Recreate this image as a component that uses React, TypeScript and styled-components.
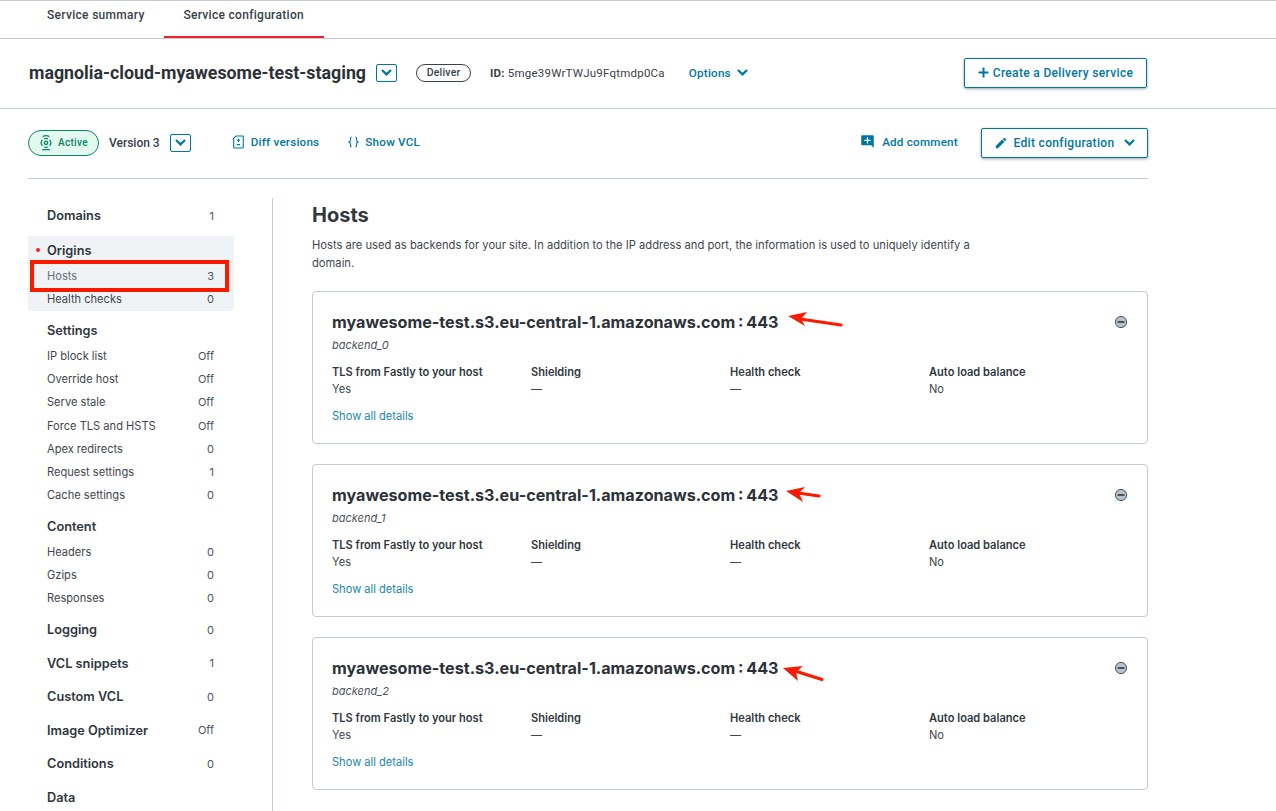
import { createGlobalStyle, styled } from "styled-components";
import { MdAddComment, MdEdit } from "react-icons/md";

const teal = "#00779e";
const ink = "#2c3238";
const line = "#c3cbd3";

const GlobalStyle = createGlobalStyle`
    html, body {
        margin: 0;
        height: 811px;
        overflow: hidden;
        background: #fff;
    }
    body {
        font-family: "Inter", "Liberation Sans", sans-serif;
        color: ${ink};
    }
`

const Tabs = styled.nav`
    display: flex;
    height: 37px;
    padding-left: 28px;
    border-top: 1px solid ${line};
    border-bottom: 1px solid ${line};
    font-family: "Roboto", sans-serif;
`

const Tab = styled.div<{ $active?: boolean }>`
    height: 37px;
    padding: 7px 19.7px 0 19px;
    box-sizing: border-box;
    font-size: 12px;
    font-weight: 500;
    letter-spacing: .3px;
    line-height: 14px;
    color: #3a4148;
    border-bottom: ${(p) => (p.$active ? "2px solid #f1222b" : "none")};
`

const ServiceBar = styled.header`
    display: flex;
    align-items: center;
    height: 70px;
    padding: 0 129px 2px 29px;
    box-sizing: border-box;
    border-bottom: 1px solid ${line};
    font-family: "Roboto", sans-serif;
`

const ServiceName = styled.h1`
    margin: 0 10px 0 0;
    font-size: 17.8px;
    font-weight: 700;
    color: ${ink};
`

const Caret = styled.button`
    display: flex;
    align-items: center;
    justify-content: center;
    width: 21px;
    height: 18px;
    padding: 0;
    border: 1px solid ${teal};
    border-radius: 2px;
    background: #fff;
    color: ${teal};
`

const TypeBadge = styled.span`
    margin-left: 19px;
    width: 55px;
    height: 18px;
    box-sizing: border-box;
    border: 1px solid #3a4148;
    border-radius: 9px;
    font-size: 10.5px;
    font-weight: 500;
    line-height: 16px;
    text-align: center;
    letter-spacing: .2px;
    color: #3a4148;
`

const ServiceId = styled.span`
    margin-left: 19px;
    font-size: 11.5px;
    letter-spacing: .22px;
    color: #3a4148;

    b {
        font-weight: 700;
    }
`

const OptionsLink = styled.span`
    display: flex;
    align-items: center;
    margin-left: 24px;
    gap: 6px;
    font-size: 11.7px;
    font-weight: 500;
    letter-spacing: .2px;
    color: ${teal};
`

const OutlineButton = styled.button<{ $w: number }>`
    display: flex;
    align-items: center;
    justify-content: center;
    width: ${(p) => p.$w}px;
    height: 30px;
    padding: 0;
    margin-left: auto;
    border: 1px solid ${teal};
    border-radius: 2px;
    background: #fff;
    box-shadow: 0 1px 3px rgba(30, 50, 70, .45);
    font-family: "Roboto", sans-serif;
    font-size: 12px;
    font-weight: 500;
    letter-spacing: .33px;
    color: ${teal};
`

const VersionBar = styled.div`
    display: flex;
    align-items: center;
    height: 70px;
    margin: 0 128px 0 28px;
    padding-bottom: 2px;
    box-sizing: border-box;
    border-bottom: 1px solid ${line};
    font-family: "Roboto", sans-serif;
`

const ActivePill = styled.span`
    display: flex;
    align-items: center;
    gap: 6px;
    width: 71px;
    height: 26px;
    padding-left: 11px;
    box-sizing: border-box;
    border: 1px solid #0c8466;
    border-radius: 13px;
    background: #e2f9f0;
    font-size: 10px;
    font-weight: 500;
    letter-spacing: .3px;
    color: #0c8466;
`

const VersionText = styled.span`
    margin: 0 10px;
    font-size: 12px;
    font-weight: 500;
    color: #3a4148;
`

const ActionLink = styled.span<{ $ml: number; $gap: number }>`
    display: flex;
    align-items: center;
    gap: ${(p) => p.$gap}px;
    margin: 0 0 2px ${(p) => p.$ml}px;
    font-size: 11.7px;
    font-weight: 500;
    letter-spacing: .2px;
    color: ${teal};
`

const Columns = styled.div`
    display: flex;
    margin: 19px 128px 0 28px;
`

const Sidebar = styled.aside`
    width: 206px;
    margin-right: 38px;
    padding-top: 3.7px;
    flex-shrink: 0;
`

const Group = styled.section<{ $current?: boolean; $gap: number }>`
    margin-bottom: ${(p) => p.$gap}px;
    border-radius: 2px;
    background: ${(p) => (p.$current ? "#f0f3f6" : "transparent")};
    position: relative;
`

const GroupTitle = styled.div`
    display: flex;
    align-items: center;
    justify-content: space-between;
    height: 28px;
    padding: 0 20px 0 19px;
    font-size: 12.75px;
    font-weight: 600;
    color: #31373e;
`

const Count = styled.span`
    font-size: 11px;
    font-weight: 400;
    color: #4b535b;
`

const Item = styled.div<{ $selected?: boolean }>`
    display: flex;
    align-items: center;
    justify-content: space-between;
    height: 23.17px;
    padding: 0 20px 0 19px;
    font-size: 11.1px;
    color: ${(p) => (p.$selected ? "#67707a" : "#3f464d")};
    position: relative;
`

const Bullet = styled.i`
    position: absolute;
    left: 8px;
    top: 12px;
    width: 4px;
    height: 4px;
    border-radius: 50%;
    background: #f1222b;
`

const Highlight = styled.div`
    position: absolute;
    left: 2px;
    top: -4px;
    width: 199px;
    height: 32px;
    box-sizing: border-box;
    border: 4px solid #fb1a00;
`

const Main = styled.main`
    flex: 1;
    padding-left: 39px;
    border-left: 1px solid ${line};
`

const PageTitle = styled.h2`
    margin: 4px 0 0;
    font-size: 20px;
    line-height: 26px;
    font-weight: 700;
    color: #31373e;
`

const Intro = styled.p`
    width: 680px;
    margin: 8px 0 19px;
    font-size: 11.2px;
    line-height: 18px;
    color: #3f464d;
`

const Card = styled.article`
    position: relative;
    height: 153px;
    margin-bottom: 20px;
    padding: 0 19px;
    box-sizing: border-box;
    border: 1px solid ${line};
    border-radius: 4px;
`

const HostName = styled.h3`
    margin: 0;
    padding-top: 19px;
    font-size: 16.15px;
    line-height: 22px;
    font-weight: 700;
    word-spacing: -1px;
    color: ${ink};
`

const BackendName = styled.div`
    margin-top: 4px;
    font-size: 11px;
    line-height: 16px;
    font-style: italic;
    color: #4b535b;
`

const Facts = styled.div`
    display: grid;
    grid-template-columns: repeat(4, 199px);
    margin-top: 11px;
`

const FactLabel = styled.div`
    font-size: 11.1px;
    line-height: 17px;
    font-weight: 600;
    color: #31373e;
`

const FactValue = styled.div`
    font-size: 11.1px;
    line-height: 17px;
    color: #3f464d;
`

const DetailsLink = styled.div`
    margin-top: 10px;
    font-size: 11.1px;
    line-height: 16px;
    color: #1a87ad;
`

const CollapseIcon = styled.svg`
    position: absolute;
    right: 19px;
    top: 23px;
`

const Arrow = styled.svg`
    position: absolute;
    left: 470px;
    top: 15px;
`

const Chevron = () => (
    <svg width="11" height="7" viewBox="0 0 11 7" fill="none" stroke="currentColor" strokeWidth="2.2">
        <path d="M1 1l4.5 4.4L10 1" />
    </svg>
)

const PlusIcon = () => (
    <svg width="11" height="11" viewBox="0 0 11 11" fill="none" stroke="currentColor" strokeWidth="2" style={{ marginRight: 4 }}>
        <path d="M5.5 .5v10M.5 5.5h10" />
    </svg>
)

const BroadcastIcon = () => (
    <svg width="12" height="18" viewBox="0 0 12 18" fill="none" stroke="#0c8466" strokeWidth="1.3">
        <circle cx="6" cy="8.8" r="1.7" />
        <path d="M2.4 5.8a4.6 4.6 0 0 0 0 6M9.6 5.8a4.6 4.6 0 0 1 0 6" />
        <path d="M2.6 2.6c1.8-1 5-1 6.8 0M4 4.8c1.2-.6 2.8-.6 4 0" />
        <path d="M4 13c1.2.5 2.8.5 4 0M2.2 15.6h7.6" />
    </svg>
)

const DiffIcon = () => (
    <svg width="11" height="14" viewBox="0 0 11 14" fill="none" stroke={teal} strokeWidth="1.1">
        <path d="M3 1H9.5a.8.8 0 0 1 .8.8V12.2a.8.8 0 0 1-.8.8H1.5a.8.8 0 0 1-.8-.8V3.2z" />
        <path d="M5.5 3.6v3.4M3.9 5.3h3.2M3.9 9.6h3.2" />
    </svg>
)

const BracesIcon = () => (
    <svg width="11" height="12" viewBox="0 0 11 12" fill="none" stroke={teal} strokeWidth="1.1">
        <path d="M3.6 1C2.4 1 2.4 2 2.4 3.4S2.2 5.6 1 6c1.2.4 1.4 1.2 1.4 2.6S2.4 11 3.6 11" />
        <path d="M7.4 1c1.2 0 1.2 1 1.2 2.4S8.8 5.6 10 6c-1.2.4-1.4 1.2-1.4 2.6S8.6 11 7.4 11" />
    </svg>
)

type Nav = { label: string; value?: string; selected?: boolean }
type NavGroup = { title: string; value?: string; current?: boolean; gap?: number; items?: Nav[] }

const navGroups: NavGroup[] = [
    { title: "Domains", value: "1", gap: 6.5 },
    {
        title: "Origins",
        current: true,
        gap: 6,
        items: [
            { label: "Hosts", value: "3", selected: true },
            { label: "Health checks", value: "0" },
        ],
    },
    {
        title: "Settings",
        gap: 6,
        items: [
            { label: "IP block list", value: "Off" },
            { label: "Override host", value: "Off" },
            { label: "Serve stale", value: "Off" },
            { label: "Force TLS and HSTS", value: "Off" },
            { label: "Apex redirects", value: "0" },
            { label: "Request settings", value: "1" },
            { label: "Cache settings", value: "0" },
        ],
    },
    {
        title: "Content",
        gap: 5.5,
        items: [
            { label: "Headers", value: "0" },
            { label: "Gzips", value: "0" },
            { label: "Responses", value: "0" },
        ],
    },
    { title: "Logging", value: "0" },
    { title: "VCL snippets", value: "1" },
    { title: "Custom VCL", value: "0" },
    { title: "Image Optimizer", value: "Off" },
    { title: "Conditions", value: "0" },
    { title: "Data" },
]

const hosts = [
    { backend: "backend_0", head: "5,9 24,5 18,12 22,19", tail: "M17 12 L58 18" },
    { backend: "backend_1", head: "3,11 22,7 16,13 20,22", tail: "M15 13 L36 16" },
    { backend: "backend_2", head: "0,15 20,13 13,19 15,28", tail: "M12 18 L39 26.5" },
]

const facts = [
    ["TLS from Fastly to your host", "Yes"],
    ["Shielding", "—"],
    ["Health check", "—"],
    ["Auto load balance", "No"],
]

export default function App() {
    return (
        <>
            <GlobalStyle />
            <Tabs>
                <Tab>Service summary</Tab>
                <Tab $active>Service configuration</Tab>
            </Tabs>

            <ServiceBar>
                <ServiceName>magnolia-cloud-myawesome-test-staging</ServiceName>
                <Caret><Chevron /></Caret>
                <TypeBadge>Deliver</TypeBadge>
                <ServiceId><b>ID:</b> 5mge39WrTWJu9Fqtmdp0Ca</ServiceId>
                <OptionsLink>Options <Chevron /></OptionsLink>
                <OutlineButton $w={183}>
                    <PlusIcon />
                    Create a Delivery service
                </OutlineButton>
            </ServiceBar>

            <VersionBar>
                <ActivePill><BroadcastIcon />Active</ActivePill>
                <VersionText>Version 3</VersionText>
                <Caret><Chevron /></Caret>
                <ActionLink $ml={42} $gap={7}><DiffIcon />Diff versions</ActionLink>
                <ActionLink $ml={29} $gap={6}><BracesIcon />Show VCL</ActionLink>
                <ActionLink $ml={440} $gap={7}><MdAddComment size={15} />Add comment</ActionLink>
                <OutlineButton $w={167}>
                    <MdEdit size={14} style={{ marginRight: 6 }} />
                    Edit configuration
                    <span style={{ width: 10 }} />
                    <Chevron />
                </OutlineButton>
            </VersionBar>

            <Columns>
                <Sidebar>
                    {navGroups.map((g) => (
                        <Group key={g.title} $current={g.current} $gap={g.gap ?? 5.5}>
                            {g.current && <Bullet />}
                            <GroupTitle>
                                {g.title}
                                {g.value && <Count>{g.value}</Count>}
                            </GroupTitle>
                            {g.items?.map((it) => (
                                <Item key={it.label} $selected={it.selected}>
                                    {it.label}
                                    <Count>{it.value}</Count>
                                    {it.selected && <Highlight />}
                                </Item>
                            ))}
                        </Group>
                    ))}
                </Sidebar>

                <Main>
                    <PageTitle>Hosts</PageTitle>
                    <Intro>
                        Hosts are used as backends for your site. In addition to the IP address and port, the information is used to uniquely identify a domain.
                    </Intro>
                    {hosts.map((h) => (
                        <Card key={h.backend}>
                            <HostName>myawesome-test.s3.eu-central-1.amazonaws.com : 443</HostName>
                            <BackendName>{h.backend}</BackendName>
                            <Facts>
                                {facts.map(([label, value]) => (
                                    <div key={label}>
                                        <FactLabel>{label}</FactLabel>
                                        <FactValue>{value}</FactValue>
                                    </div>
                                ))}
                            </Facts>
                            <DetailsLink>Show all details</DetailsLink>
                            <CollapseIcon width="14" height="14" viewBox="0 0 14 14">
                                <circle cx="7" cy="7" r="5.6" fill="#b9c2cb" stroke="#4b535b" strokeWidth="1" />
                                <rect x="3.6" y="6" width="6.8" height="2" fill="#4b535b" />
                            </CollapseIcon>
                            <Arrow width="62" height="30" viewBox="0 0 62 30">
                                <path d={h.tail} stroke="#fb1a00" strokeWidth="3.2" strokeLinecap="round" fill="none" />
                                <polygon points={h.head} fill="#fb1a00" />
                            </Arrow>
                        </Card>
                    ))}
                </Main>
            </Columns>
        </>
    )
}
